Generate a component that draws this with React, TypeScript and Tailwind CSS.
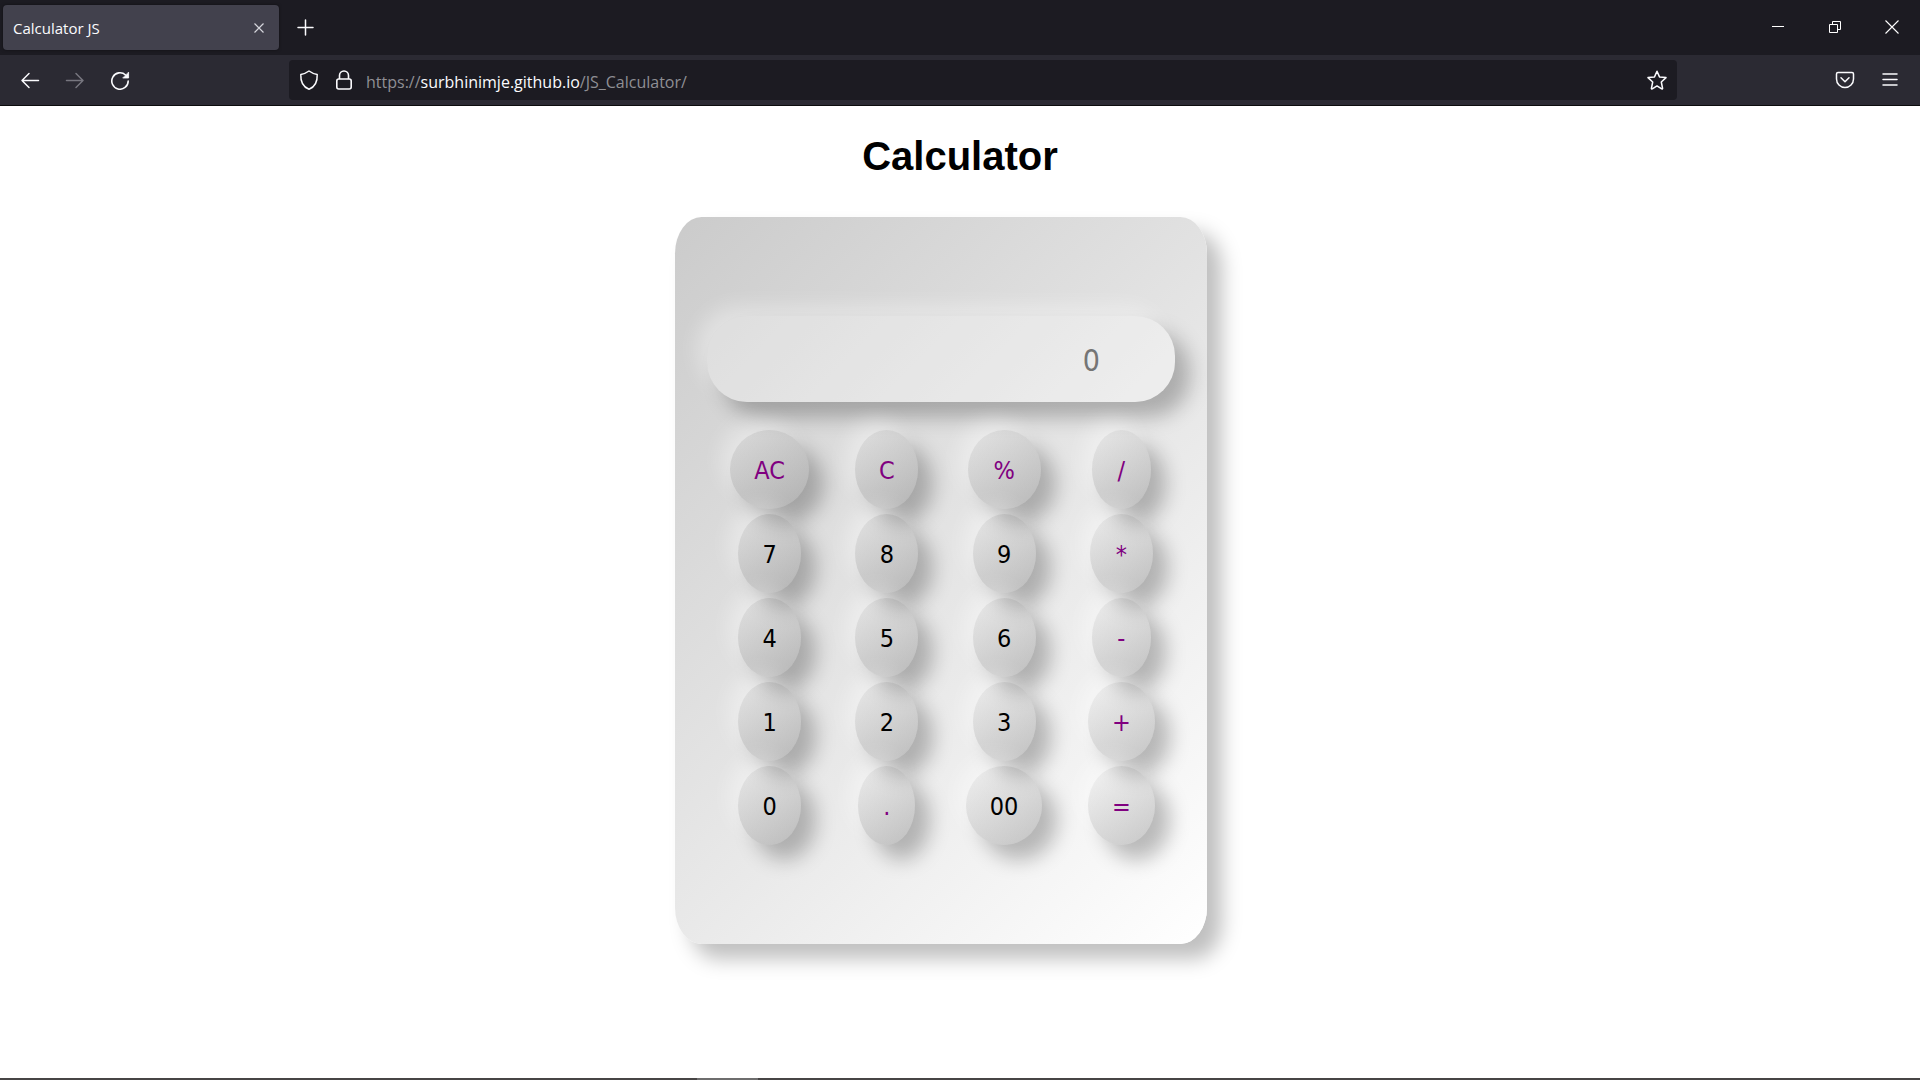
import React from "react";

type Key = { label: string; width: string; operator?: boolean };

const KEYS: Key[] = [
  { label: "AC", width: "w-[79px]", operator: true },
  { label: "C", width: "w-[63px]", operator: true },
  { label: "%", width: "w-[73px]", operator: true },
  { label: "/", width: "w-[59px]", operator: true },
  { label: "7", width: "w-[63px]" },
  { label: "8", width: "w-[63px]" },
  { label: "9", width: "w-[63px]" },
  { label: "*", width: "w-[63px]", operator: true },
  { label: "4", width: "w-[63px]" },
  { label: "5", width: "w-[63px]" },
  { label: "6", width: "w-[63px]" },
  { label: "-", width: "w-[59px]", operator: true },
  { label: "1", width: "w-[63px]" },
  { label: "2", width: "w-[63px]" },
  { label: "3", width: "w-[63px]" },
  { label: "+", width: "w-[67px]", operator: true },
  { label: "0", width: "w-[63px]" },
  { label: ".", width: "w-[57px]", operator: true },
  { label: "00", width: "w-[76px]" },
  { label: "=", width: "w-[67px]", operator: true },
];

type IconProps = { d: string; className?: string; stroke?: string };

function Icon({ d, className = "size-5", stroke = "#fbfbfe" }: IconProps) {
  return (
    <svg
      viewBox="0 0 20 20"
      className={className}
      fill="none"
      stroke={stroke}
      strokeWidth="1.5"
      strokeLinecap="round"
      strokeLinejoin="round"
      aria-hidden="true"
    >
      <path d={d} />
    </svg>
  );
}

function TabStrip() {
  return (
    <div className="flex h-[55px] items-start bg-[#1c1b22]">
      <div className="mt-[5px] ml-[3px] flex h-[45px] w-[276px] items-center justify-between rounded bg-[#42414d] pr-3 pl-[10px] shadow-[0_0_3px_rgba(0,0,0,0.5)]">
        <span className="text-[15px] leading-5">Calculator JS</span>
        <button type="button" aria-label="Close tab" className="flex size-4 items-center justify-center">
          <svg viewBox="0 0 16 16" className="size-4" fill="none" stroke="#d5d5dc" strokeWidth="1.2" aria-hidden="true">
            <path d="M3.5 3.5l9 9M12.5 3.5l-9 9" />
          </svg>
        </button>
      </div>
      <button type="button" aria-label="New tab" className="mt-[17px] ml-4 flex size-5 items-center justify-center">
        <Icon d="M10.5 3v15M3 10.5h15" />
      </button>
      <div className="ml-auto flex h-[54px] items-center gap-[37px] pr-[18px]">
        <button type="button" aria-label="Minimize" className="size-5">
          <svg viewBox="0 0 20 20" className="size-5" stroke="#fff" aria-hidden="true">
            <path d="M4 9.5h12" />
          </svg>
        </button>
        <button type="button" aria-label="Restore" className="size-5">
          <svg viewBox="0 0 20 20" className="size-5" fill="none" stroke="#fff" aria-hidden="true">
            <path d="M4.500 7.500h8v8h-8zM7.500 7V4.500h8v8H13" />
          </svg>
        </button>
        <button type="button" aria-label="Close window" className="size-5">
          <svg viewBox="0 0 20 20" className="size-5" fill="none" stroke="#fff" strokeWidth="1.1" aria-hidden="true">
            <path d="M3.500 3.500l13 13M16.500 3.500l-13 13" />
          </svg>
        </button>
      </div>
    </div>
  );
}

function Toolbar() {
  return (
    <div className="flex h-[51px] items-center border-b border-[#0c0c0d] bg-[#2b2a33]">
      <div className="flex items-center gap-[25px] pl-5">
        <button type="button" aria-label="Back" className="size-5">
          <Icon d="M18.500 10.500H2M9 3.500l-7 7 7 7" />
        </button>
        <button type="button" aria-label="Forward" disabled className="size-5">
          <Icon d="M1.500 10.500H18M11 3.500l7 7-7 7" stroke="#77767f" />
        </button>
        <button type="button" aria-label="Reload" className="size-5">
          <svg viewBox="0 0 20 20" className="size-5" fill="none" stroke="#fbfbfe" strokeWidth="1.6" strokeLinecap="round" aria-hidden="true">
            <path d="M18.200 11a8.200 8.200 0 1 1-2.600-6" />
            <path d="M18.600 2.500v5.500h-5.500z" fill="#fbfbfe" strokeWidth="0.800" strokeLinejoin="round" />
          </svg>
        </button>
      </div>
      <div className="ml-[159px] flex h-10 min-w-0 flex-1 items-center rounded bg-[#1c1b22] px-[10px]">
        <button type="button" aria-label="Tracking protection" className="size-5">
          <Icon d="M10 1C7.500 2.800 4.800 4 1.800 4.500 1.500 11 4 17 10 19.200 16 17 18.500 11 18.200 4.500 15.200 4 12.500 2.800 10 1z" />
        </button>
        <button type="button" aria-label="Connection secure" className="ml-[15px] size-5">
          <svg viewBox="0 0 20 20" className="size-5" fill="none" stroke="#fbfbfe" strokeWidth="1.6" aria-hidden="true">
            <rect x="2.800" y="9" width="14.400" height="10" rx="2" />
            <path d="M5.500 9V5.500a4.500 4.500 0 0 1 9 0V9" />
          </svg>
        </button>
        <a href="#" className="ml-3 min-w-0 flex-1 truncate pt-1 text-[16px] leading-6 text-[#8f8f94]">
          https://<span className="text-[#fbfbfe]">surbhinimje.github.io</span>/JS_Calculator/
        </a>
        <button type="button" aria-label="Bookmark this page" className="size-5">
          <Icon d="M10 1.200l2.500 5.700 6.500.7-4.700 4.400 1.300 6.500q-.2.700-.9.400L10 15.900l-4.700 3q-.7.300-.9-.4L5.700 12 1 7.600l6.500-.7z" />
        </button>
      </div>
      <div className="ml-[158px] flex items-center gap-[25px] pr-5">
        <button type="button" aria-label="Save to Pocket" className="size-5">
          <Icon d="M3 2.500h14q1.500 0 1.500 1.500v5a8.500 8.500 0 0 1-17 0V4q0-1.500 1.500-1.500zM6 7.800l4 4 4-4" />
        </button>
        <button type="button" aria-label="Menu" className="size-5">
          <Icon d="M3 4h14M3 9.500h14M3 15h14" />
        </button>
      </div>
    </div>
  );
}

function Calculator() {
  return (
    <section
      aria-label="Calculator"
      className="w-[532px] rounded-[5%] bg-[linear-gradient(135deg,#cbcbcb,#ffffff)] pt-[99px] pb-[99px] pl-8 shadow-[15px_15px_20px_rgba(0,0,0,0.25),-10px_-10px_20px_rgba(255,255,255,0.35)]"
    >
      <input
        type="text"
        aria-label="Result"
        placeholder="0"
        readOnly
        className="block h-[86px] w-[468px] rounded-[40px] bg-white/30 pt-[2px] pr-[75px] text-right text-[30px] shadow-[15px_15px_20px_rgba(0,0,0,0.25),-10px_-10px_20px_rgba(255,255,255,0.35)] outline-none placeholder:text-[#757575]"
      />
      <div className="mt-7 ml-1 grid w-[469px] grid-cols-4 justify-items-center gap-y-[5px]">
        {KEYS.map((key) => (
          <button
            key={key.label}
            type="button"
            className={`${key.width} ${
              key.operator ? "text-[#800080]" : "text-black"
            } h-[79px] rounded-[50%] bg-[linear-gradient(145deg,rgba(255,255,255,0.1),rgba(0,0,0,0.2))] pt-[2px] text-center text-[25px] leading-[30px] shadow-[15px_15px_20px_rgba(0,0,0,0.25),-10px_-10px_20px_rgba(255,255,255,0.35)]`}
          >
            {key.label}
          </button>
        ))}
      </div>
    </section>
  );
}

export default function App() {
  return (
    <div className="flex min-h-screen flex-col bg-white">
      <header className="font-['Open_Sans','Noto_Sans',sans-serif] text-[#fbfbfe]">
        <TabStrip />
        <Toolbar />
      </header>
      <main className="flex flex-1 flex-col items-center font-['DejaVu_Sans_Condensed','Noto_Sans',sans-serif]">
        <h1 className="mt-[27px] font-['Liberation_Sans',Arial,sans-serif] text-[40px] leading-[46px] font-bold text-black">
          Calculator
        </h1>
        <div className="mt-[38px] mr-[38px]">
          <Calculator />
        </div>
      </main>
      <footer className="flex h-[2px] bg-[#474545]">
        <div className="ml-[697px] w-[61px] bg-[#6e6d6d]" />
      </footer>
    </div>
  );
}
